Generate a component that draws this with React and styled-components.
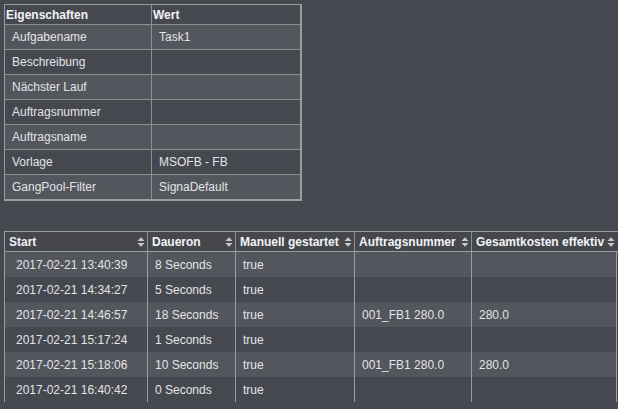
import styled, { createGlobalStyle } from "styled-components";

const GlobalStyle = createGlobalStyle`
  html, body {
    margin: 0;
    padding: 0;
    background: #46484f;
  }
  body {
    font-family: "Liberation Sans", Arial, sans-serif;
    font-size: 12px;
    color: #e8e9ec;
    width: 618px;
    height: 409px;
    overflow: hidden;
  }
`;

const Page = styled.div`
  display: flex;
  flex-direction: column;
  gap: 30px;
  padding: 4px 0 0 4px;
`;

/* Eigenschaften table */

const PropTable = styled.div`
  width: 298px;
  box-sizing: border-box;
  border: 1px solid #9a9ca1;
  border-right-width: 2px;
  border-bottom-width: 2px;
`;

const PropRow = styled.div`
  display: grid;
  grid-template-columns: 147px 148px;
  height: ${(p) => (p.$header ? 19 : 24)}px;
  background: ${(p) => (p.$light ? "#53565d" : "#46484f")};
  border-bottom: ${(p) => (p.$last ? "none" : "1px solid #8d8f94")};
  & > div:first-child {
    border-right: 1px solid #8d8f94;
  }
`;

const PropCell = styled.div`
  display: flex;
  align-items: center;
  padding-left: ${(p) => (p.$header ? 1 : 7)}px;
  font-weight: ${(p) => (p.$header ? "bold" : "normal")};
  color: ${(p) => (p.$header ? "#f2f3f5" : "#e3e4e7")};
  white-space: nowrap;
  overflow: hidden;
`;

/* Runs table */

const RunTable = styled.div`
  display: flex;
  flex-direction: column;
  width: 614px;
`;

const COLS = "143px 88px 119px 117px 145px";

const HeadRow = styled.div`
  display: grid;
  grid-template-columns: ${COLS} 1fr;
  height: 19px;
  border-top: 1px solid #9a9ca1;
  border-bottom: 1px solid #9a9ca1;
  border-left: 1px solid #9a9ca1;
  background: #45474d;
`;

const HeadCell = styled.div`
  display: flex;
  align-items: center;
  justify-content: space-between;
  padding: 0 2px 0 4px;
  font-weight: bold;
  color: #f2f3f5;
  white-space: nowrap;
  overflow: hidden;
  border-right: ${(p) => (p.$noline ? "none" : "1px solid #8d8f94")};
`;

const BodyRow = styled.div`
  display: grid;
  grid-template-columns: ${COLS};
  width: 613px;
  height: 25px;
  box-sizing: border-box;
  border-left: 1px solid #9a9ca1;
  background: ${(p) => (p.$light ? "#53565d" : "#46484f")};
`;

const BodyCell = styled.div`
  display: flex;
  align-items: center;
  padding-left: ${(p) => (p.$first ? 11 : 7)}px;
  border-right: 1px solid #9a9ca1;
  color: #e3e4e7;
  white-space: nowrap;
  overflow: hidden;
`;

const SortIcon = () => (
  <svg width="8" height="12" viewBox="0 0 8 12">
    <polygon points="0.5,5 4,1.2 7.5,5" fill="#c9cacd" />
    <polygon points="0.5,7 4,10.8 7.5,7" fill="#c9cacd" />
  </svg>
);

const properties = [
  ["Aufgabename", "Task1"],
  ["Beschreibung", ""],
  ["Nächster Lauf", ""],
  ["Auftragsnummer", ""],
  ["Auftragsname", ""],
  ["Vorlage", "MSOFB - FB"],
  ["GangPool-Filter", "SignaDefault"],
];

const columns = [
  "Start",
  "Daueron",
  "Manuell gestartet",
  "Auftragsnummer",
  "Gesamtkosten effektiv",
];

const runs = [
  ["2017-02-21 13:40:39", "8 Seconds", "true", "", ""],
  ["2017-02-21 14:34:27", "5 Seconds", "true", "", ""],
  ["2017-02-21 14:46:57", "18 Seconds", "true", "001_FB1 280.0", "280.0"],
  ["2017-02-21 15:17:24", "1 Seconds", "true", "", ""],
  ["2017-02-21 15:18:06", "10 Seconds", "true", "001_FB1 280.0", "280.0"],
  ["2017-02-21 16:40:42", "0 Seconds", "true", "", ""],
];

export default function App() {
  return (
    <>
      <GlobalStyle />
      <Page>
        <PropTable>
          <PropRow $header>
            <PropCell $header>Eigenschaften</PropCell>
            <PropCell $header>Wert</PropCell>
          </PropRow>
          {properties.map(([name, value], i) => (
            <PropRow
              key={name}
              $light={i % 2 === 0}
              $last={i === properties.length - 1}
            >
              <PropCell>{name}</PropCell>
              <PropCell>{value}</PropCell>
            </PropRow>
          ))}
        </PropTable>

        <RunTable>
          <HeadRow>
            {columns.map((col, i) => (
              <HeadCell key={col} $noline={i === columns.length - 1}>
                <span>{col}</span>
                <SortIcon />
              </HeadCell>
            ))}
            <HeadCell $noline />
          </HeadRow>
          {runs.map((run, i) => (
            <BodyRow key={run[0]} $light={i % 2 === 0}>
              {run.map((value, j) => (
                <BodyCell key={j} $first={j === 0}>
                  {value}
                </BodyCell>
              ))}
            </BodyRow>
          ))}
        </RunTable>
      </Page>
    </>
  );
}
